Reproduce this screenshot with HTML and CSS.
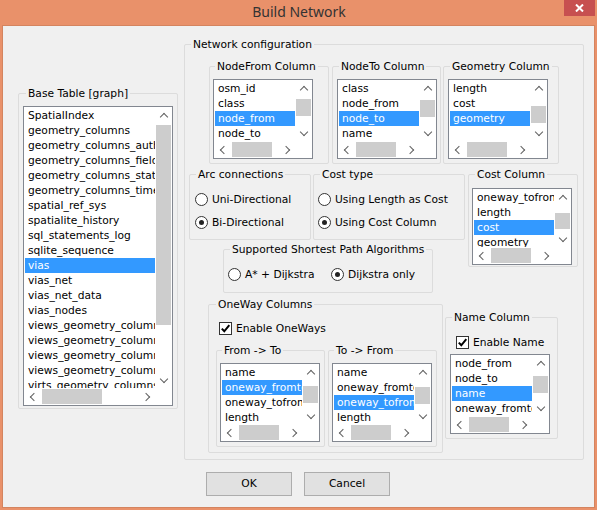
FILE: index.html
```html
<!DOCTYPE html>
<html>
<head>
<meta charset="utf-8">
<link rel="stylesheet" href="styles.css">
</head>
<body>
<div class="window">
  <div class="titlebar">
    <span></span>
    <span class="title">Build Network</span>
    <span class="close"><svg width="9" height="8" viewBox="0 0 9 8"><path d="M1 0.5 L8 7.5 M8 0.5 L1 7.5" stroke="#fff" stroke-width="2"/></svg></span>
  </div>
  <div class="client">
    <div class="main">
      <div class="frame g-base">
        <div class="glabel gl7">Base Table [graph]</div>
        <div class="lb lb-base">
          <div class="items">
            <div class="it">SpatialIndex</div>
            <div class="it">geometry_columns</div>
            <div class="it">geometry_columns_auth</div>
            <div class="it">geometry_columns_field_infos</div>
            <div class="it">geometry_columns_statistics</div>
            <div class="it">geometry_columns_time</div>
            <div class="it">spatial_ref_sys</div>
            <div class="it">spatialite_history</div>
            <div class="it">sql_statements_log</div>
            <div class="it">sqlite_sequence</div>
            <div class="it sel">vias</div>
            <div class="it">vias_net</div>
            <div class="it">vias_net_data</div>
            <div class="it">vias_nodes</div>
            <div class="it">views_geometry_columns</div>
            <div class="it">views_geometry_columns_auth</div>
            <div class="it">views_geometry_columns_field_infos</div>
            <div class="it">views_geometry_columns_statistics</div>
            <div class="it">virts_geometry_columns</div>
          </div>
          <div class="vs"><div class="arr up"></div><div class="vtrack"><div class="vthumb" style="margin-top:1px;height:200px"></div></div><div class="arr down"></div></div>
          <div class="hs"><div class="arr left"></div><div class="htrack"><div class="hthumb" style="margin-left:1px;width:60px"></div></div><div class="arr right"></div></div>
          <div class="corner"></div>
        </div>
      </div>

      <div class="frame g-net">
        <div class="glabel gl6">Network configuration</div>

        <div class="row1">
          <div class="frame g-nf">
            <div class="glabel gl5">NodeFrom Column</div>
            <div class="lb lb-small lb-nf">
              <div class="items">
                <div class="it">osm_id</div>
                <div class="it">class</div>
                <div class="it sel">node_from</div>
                <div class="it">node_to</div>
              </div>
              <div class="vs"><div class="arr up"></div><div class="vtrack"><div class="vthumb" style="margin-top:2px;height:17px"></div></div><div class="arr down"></div></div>
              <div class="hs"><div class="arr left"></div><div class="htrack"><div class="hthumb" style="margin-left:1px;width:40px"></div></div><div class="arr right"></div></div>
              <div class="corner"></div>
            </div>
          </div>
          <div class="frame g-nt">
            <div class="glabel gl6">NodeTo Column</div>
            <div class="lb lb-small lb-m4">
              <div class="items">
                <div class="it">class</div>
                <div class="it">node_from</div>
                <div class="it sel">node_to</div>
                <div class="it">name</div>
              </div>
              <div class="vs"><div class="arr up"></div><div class="vtrack"><div class="vthumb" style="margin-top:3px;height:17px"></div></div><div class="arr down"></div></div>
              <div class="hs"><div class="arr left"></div><div class="htrack"><div class="hthumb" style="margin-left:1px;width:40px"></div></div><div class="arr right"></div></div>
              <div class="corner"></div>
            </div>
          </div>
          <div class="frame g-gc">
            <div class="glabel gl6">Geometry Column</div>
            <div class="lb lb-small lb-m4">
              <div class="items">
                <div class="it">length</div>
                <div class="it">cost</div>
                <div class="it sel">geometry</div>
              </div>
              <div class="vs"><div class="arr up"></div><div class="vtrack"><div class="vthumb" style="margin-top:9px;height:17px"></div></div><div class="arr down"></div></div>
              <div class="hs"><div class="arr left"></div><div class="htrack"><div class="hthumb" style="margin-left:1px;width:40px"></div></div><div class="arr right"></div></div>
              <div class="corner"></div>
            </div>
          </div>
        </div>

        <div class="row2">
          <div class="col2">
            <div class="row2a">
              <div class="frame g-arc">
                <div class="glabel gl6">Arc connections</div>
                <div class="radio r-first rm5"><span class="rb"></span><span>Uni-Directional</span></div>
                <div class="radio r-second rm5"><span class="rb on"></span><span>Bi-Directional</span></div>
              </div>
              <div class="frame g-ct">
                <div class="glabel gl6">Cost type</div>
                <div class="radio r-first rm4"><span class="rb"></span><span>Using Length as Cost</span></div>
                <div class="radio r-second rm4"><span class="rb on"></span><span>Using Cost Column</span></div>
              </div>
            </div>
            <div class="frame g-sp">
              <div class="glabel gl6">Supported Shortest Path Algorithms</div>
              <div class="sp-row">
                <div class="radio sp-a"><span class="rb"></span><span>A* + Dijkstra</span></div>
                <div class="radio"><span class="rb on"></span><span>Dijkstra only</span></div>
              </div>
            </div>
          </div>
          <div class="frame g-cc">
            <div class="glabel gl6">Cost Column</div>
            <div class="lb lb-cc">
              <div class="items">
                <div class="it">oneway_tofrom</div>
                <div class="it">length</div>
                <div class="it sel">cost</div>
                <div class="it">geometry</div>
              </div>
              <div class="vs"><div class="arr up"></div><div class="vtrack"><div class="vthumb" style="margin-top:7px;height:16px"></div></div><div class="arr down"></div></div>
              <div class="hs"><div class="arr left"></div><div class="htrack"><div class="hthumb" style="margin-left:1px;width:40px"></div></div><div class="arr right"></div></div>
              <div class="corner"></div>
            </div>
          </div>
        </div>

        <div class="row3">
          <div class="frame g-ow">
            <div class="glabel gl7">OneWay Columns</div>
            <div class="check ow-check"><span class="cb"><svg width="11" height="11" viewBox="0 0 11 11"><path d="M1.8 5.6 L4.3 8.3 L9.3 2.2" fill="none" stroke="#000" stroke-width="2"/></svg></span><span>Enable OneWays</span></div>
            <div class="ow-row">
              <div class="frame g-ft">
                <div class="glabel gl5">From -&gt; To</div>
                <div class="lb lb-ow">
                  <div class="items">
                    <div class="it">name</div>
                    <div class="it sel">oneway_fromto</div>
                    <div class="it">oneway_tofrom</div>
                    <div class="it">length</div>
                  </div>
                  <div class="vs"><div class="arr up"></div><div class="vtrack"><div class="vthumb" style="margin-top:5px;height:17px"></div></div><div class="arr down"></div></div>
                  <div class="hs"><div class="arr left"></div><div class="htrack"><div class="hthumb" style="margin-left:1px;width:40px"></div></div><div class="arr right"></div></div>
                  <div class="corner"></div>
                </div>
              </div>
              <div class="frame g-tf">
                <div class="glabel gl5">To -&gt; From</div>
                <div class="lb lb-ow">
                  <div class="items">
                    <div class="it">name</div>
                    <div class="it">oneway_fromto</div>
                    <div class="it sel">oneway_tofrom</div>
                    <div class="it">length</div>
                  </div>
                  <div class="vs"><div class="arr up"></div><div class="vtrack"><div class="vthumb" style="margin-top:6px;height:17px"></div></div><div class="arr down"></div></div>
                  <div class="hs"><div class="arr left"></div><div class="htrack"><div class="hthumb" style="margin-left:1px;width:40px"></div></div><div class="arr right"></div></div>
                  <div class="corner"></div>
                </div>
              </div>
            </div>
          </div>
          <div class="frame g-nc">
            <div class="glabel gl6">Name Column</div>
            <div class="check nc-check"><span class="cb"><svg width="11" height="11" viewBox="0 0 11 11"><path d="M1.8 5.6 L4.3 8.3 L9.3 2.2" fill="none" stroke="#000" stroke-width="2"/></svg></span><span>Enable Name</span></div>
            <div class="lb lb-nc">
              <div class="items">
                <div class="it">node_from</div>
                <div class="it">node_to</div>
                <div class="it sel">name</div>
                <div class="it">oneway_fromto</div>
              </div>
              <div class="vs"><div class="arr up"></div><div class="vtrack"><div class="vthumb" style="margin-top:4px;height:17px"></div></div><div class="arr down"></div></div>
              <div class="hs"><div class="arr left"></div><div class="htrack"><div class="hthumb" style="margin-left:1px;width:40px"></div></div><div class="arr right"></div></div>
              <div class="corner"></div>
            </div>
          </div>
        </div>
      </div>
    </div>
    <div class="btns">
      <div class="btn">OK</div>
      <div class="btn">Cancel</div>
    </div>
  </div>
</div>
</body>
</html>
```

FILE: styles.css
```css
* { box-sizing: border-box; }
html, body { margin: 0; padding: 0; }
body {
  font-family: "DejaVu Sans", Verdana, sans-serif;
  font-size: 10.7px;
  color: #000;
  background: #E9916A;
}
.window {
  width: 597px;
  height: 510px;
  background: #E9916A;
  overflow: hidden;
}
.titlebar {
  height: 25px;
  display: grid;
  grid-template-columns: 1fr auto 1fr;
}
.title {
  font-family: "Noto Sans", "Open Sans", sans-serif;
  font-size: 14px;
  line-height: 23px;
  color: #333;
  padding-left: 1px;
}
.close {
  justify-self: end;
  align-self: start;
  width: 31px;
  height: 16px;
  margin-right: 2px;
  background: #C75050;
  display: flex;
  align-items: center;
  justify-content: center;
  padding-top: 0;
}
.client {
  margin-left: 2px;
  width: 593px;
  height: 483px;
  background: #F0F0F0;
  border: 1px solid #D4845F;
}
.main {
  display: flex;
  align-items: flex-start;
}
.frame {
  border: 1px solid #DCDCDC;
  border-radius: 2px;
}
.glabel {
  display: block;
  width: max-content;
  height: 13px;
  line-height: 13px;
  margin-top: -7px;
  padding: 0 2px;
  background: #F0F0F0;
  white-space: nowrap;
}
.gl5 { margin-left: 5px; }
.gl6 { margin-left: 6px; }
.gl7 { margin-left: 7px; }

/* list boxes */
.lb {
  display: grid;
  grid-template-columns: minmax(0, 1fr) 17px;
  grid-template-rows: minmax(0, 1fr) 17px;
  border: 1px solid #828790;
  background: #fff;
}
.items {
  overflow: hidden;
  padding-top: 1px;
}
.it {
  height: 15px;
  line-height: 15px;
  margin-left: 1px;
  padding-left: 3px;
  white-space: nowrap;
  overflow: hidden;
}
.sel {
  background: #3399FF;
  color: #fff;
}
.vs {
  display: flex;
  flex-direction: column;
  background: #fff;
}
.hs {
  display: flex;
  background: #fff;
}
.arr {
  flex: 0 0 17px;
  width: 17px;
  height: 17px;
  display: flex;
  align-items: center;
  justify-content: center;
}
.arr::before {
  content: "";
  width: 5px;
  height: 5px;
  border-left: 1.6px solid #606060;
  border-top: 1.6px solid #606060;
}
.up::before { transform: translateY(1px) rotate(45deg); }
.down::before { transform: translateY(-1px) rotate(225deg); }
.left::before { transform: translateX(1px) rotate(-45deg); }
.right::before { transform: translateX(-1px) rotate(135deg); }
.vtrack { flex: 1; min-height: 0; }
.vthumb { background: #CDCDCD; margin-left: 1px; margin-right: 1px; }
.htrack { flex: 1; min-width: 0; display: flex; }
.hthumb { background: #CDCDCD; margin-top: 1px; margin-bottom: 1px; }
.corner { background: #fff; }

/* left group */
.g-base {
  margin: 67px 0 0 15px;
  width: 160px;
  height: 316px;
}
.lb-base {
  margin: 6px 0 0 4px;
  width: 150px;
  height: 300px;
}

/* network configuration */
.g-net {
  margin: 18px 0 0 6px;
  width: 400px;
  height: 416px;
}
.row1 {
  display: flex;
  margin: 15px 0 0 24px;
}
.g-nf { width: 120px; height: 98px; }
.g-nt { margin-left: 3px; width: 109px; height: 98px; }
.g-gc { margin-left: 2px; width: 116px; height: 98px; }
.lb-small {
  margin-top: 6px;
  width: 100px;
  height: 80px;
}
.lb-nf { margin-left: 3px; }
.lb-m4 { margin-left: 4px; }

.row2 {
  display: flex;
  align-items: flex-start;
  margin: 10px 0 0 4px;
}
.col2 { display: flex; flex-direction: column; }
.row2a { display: flex; }
.g-arc { width: 122px; height: 66px; }
.g-ct { margin-left: 2px; width: 152px; height: 66px; }
.g-sp { margin: 9px 0 0 34px; width: 210px; height: 44px; }
.g-cc { margin-left: 3px; width: 110px; height: 93px; }
.lb-cc {
  margin: 7px 0 0 3px;
  width: 100px;
  height: 77px;
}

.radio {
  display: flex;
  align-items: center;
  height: 16px;
  white-space: nowrap;
}
.r-first { margin-top: 10px; }
.r-second { margin-top: 7px; }
.rm5 { margin-left: 5px; }
.rm4 { margin-left: 4px; }
.rb {
  flex: 0 0 13px;
  width: 13px;
  height: 13px;
  border: 1px solid #333;
  border-radius: 50%;
  background: #fff;
  margin-right: 4px;
  display: flex;
  align-items: center;
  justify-content: center;
}
.rb.on::after {
  content: "";
  width: 5px;
  height: 5px;
  border-radius: 50%;
  background: #222;
}
.sp-row {
  display: flex;
  margin: 10px 0 0 4px;
}
.sp-a { width: 103px; }

.row3 {
  display: flex;
  align-items: flex-start;
  margin: 11px 0 0 23px;
}
.g-ow { width: 235px; height: 149px; }
.check {
  display: flex;
  align-items: center;
  height: 16px;
  white-space: nowrap;
}
.ow-check { margin: 9px 0 0 10px; }
.nc-check { margin: 10px 0 0 10px; }
.cb {
  flex: 0 0 13px;
  width: 13px;
  height: 13px;
  border: 1px solid #333;
  background: #fff;
  margin-right: 4px;
  display: flex;
  align-items: center;
  justify-content: center;
}
.ow-row {
  display: flex;
  margin: 14px 0 0 7px;
}
.g-ft { width: 109px; height: 97px; }
.g-tf { margin-left: 3px; width: 109px; height: 97px; }
.lb-ow {
  margin: 6px 0 0 3px;
  width: 100px;
  height: 79px;
}
.g-nc { margin: 13px 0 0 2px; width: 113px; height: 122px; }
.lb-nc {
  margin: 4px 0 0 4px;
  width: 100px;
  height: 80px;
}

/* buttons */
.btns {
  display: flex;
  gap: 12px;
  margin: 12px 0 0 203px;
}
.btn {
  width: 86px;
  height: 24px;
  line-height: 22px;
  text-align: center;
  background: #E1E1E1;
  border: 1px solid #ADADAD;
}
```
